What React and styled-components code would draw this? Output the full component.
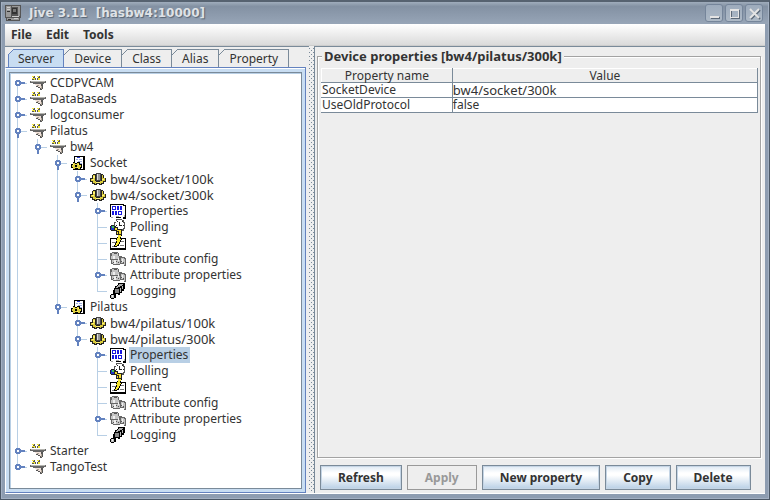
import React, { useState } from 'react';
import styled, { createGlobalStyle, css } from 'styled-components'

const GlobalStyle = createGlobalStyle`
    * {
        box-sizing: border-box;
    }
    body {
        margin: 0;
        background: #eee;
        color: #333;
        font-family: 'Noto Sans', 'DejaVu Sans', sans-serif;
        font-size: 12px;
    }
    button {
        font: inherit;
        color: inherit;
    }
`

const Window = styled.div`
    min-height: 100vh;
    display: flex;
    flex-direction: column;
    padding: 0 4px 5px;
    background: #8e9db1;
    border: 1px solid #4c5866;
    border-top: 2px solid #566270;
    box-shadow: inset 0 0 0 1px #a3b0c2;
`

const TitleBar = styled.header`
    display: flex;
    align-items: center;
    height: 22px;
    padding: 0 5px 0 3px;
    margin: 0 -3px;
    background: linear-gradient(#a0adbc, #8391a3 20%, #97a5b7);

    h1 {
        flex: 1;
        margin: 0 0 0 8px;
        color: #dfe2e6;
        font-family: 'DejaVu Sans', sans-serif;
        font-size: 12px;
        line-height: 20px;
        text-shadow: 1px 1px 1px #566373;
        white-space: pre;
    }
`

const WindowButtons = styled.div`
    display: flex;
    gap: 2px;
`

const WindowButton = styled.button`
    width: 18px;
    height: 18px;
    padding: 0;
    border: 1px solid #75859a;
    border-radius: 3px;
    background: linear-gradient(#9dabbc, #adb9c6);

    svg {
        display: block;
    }
`

const MenuBar = styled.nav`
    display: flex;
    gap: 14px;
    height: 22px;
    padding: 0 6px;
    background: linear-gradient(#fff, #dadada);
    border-bottom: 1px solid #ccc;

    button {
        padding: 0;
        border: 0;
        background: none;
        font-weight: bold;
        line-height: 20px;
    }
`

const Body = styled.main`
    flex: 1;
    display: flex;
    background: #eee;
    border-bottom: 1px solid #fff;
`

const LeftPane = styled.section`
    flex: 0 0 40%;
    min-width: 0;
    display: flex;
    flex-direction: column;
    padding-right: 3px;
    border-top: 1px solid #7a8a99;
`

const TabList = styled.div`
    display: flex;
    padding: 2px 3px 0;
`

const Tab = styled.button`
    position: relative;
    height: 18px;
    padding: 0 10px;
    border: 1px solid #7a8a99;
    border-width: 1px 1px 0 0;
    background: #eee;
    line-height: 16px;

    &::before {
        content: '';
        position: absolute;
        top: -1px;
        left: 0;
        width: 6px;
        height: 6px;
        background: linear-gradient(135deg, #eee 45%, #7a8a99 45%, #7a8a99 58%, #eee 58%);
    }

    ${props => props.$selected && css`
        padding: 0 9px;
        background: #c8ddf2;
        border-color: #6382bf;
        border-left-width: 1px;

        &::before {
            left: -1px;
            background: linear-gradient(135deg, #eee 45%, #6382bf 45%, #6382bf 58%, #c8ddf2 58%);
        }
    `}
`

const TabPanel = styled.div`
    flex: 1;
    display: flex;
    padding: 4px 3px 3px;
    background: #c8ddf2;
    border: 1px solid #6382bf;
    border-left-color: #fff;
    box-shadow: inset 0 1px #fff;
`

const Tree = styled.ul`
    flex: 1;
    margin: 0;
    padding: 2px 0;
    list-style: none;
    background: #fff;
    border: 1px solid #7a8a99;
    box-shadow: inset 1px 1px #b8cfe5;
`

const TreeRow = styled.li`
    display: flex;
    height: 16px;
`

const Toggle = styled.button`
    width: 20px;
    height: 16px;
    padding: 0;
    border: 0;
    background: none;
`

const Drawing = styled.svg`
    display: block;
    flex: none;
`

const NodeLabel = styled.span`
    margin-left: 3px;
    padding: 0 2px 0 1px;
    font-size: ${props => props.$path ? '13px' : '12px'};
    line-height: 16px;
    white-space: nowrap;
    background: ${props => props.$selected ? '#b8cfe5' : 'none'};
`

const Splitter = styled.div`
    width: 6px;
    padding: 2px 0;
    border-right: 1px solid #7a8a99;

    &::before {
        content: '';
        display: block;
        height: 100%;
        background:
            conic-gradient(at 1px 1px, transparent 75%, #7a8a99 0) 0 0 / 4px 4px,
            conic-gradient(at 1px 1px, transparent 75%, #7a8a99 0) 2px 2px / 4px 4px;
    }
`

const RightPane = styled.section`
    flex: 1;
    min-width: 0;
    display: flex;
    flex-direction: column;
    padding: 1px 3px 3px 2px;
    border-top: 1px solid #7a8a99;
`

const Properties = styled.fieldset`
    flex: 1;
    min-width: 0;
    margin: 0 1px 0 0;
    padding: 4px 2px 4px 3px;
    border: 1px solid #a3a3a3;
    box-shadow: 1px 1px #fff, inset 1px 1px #fff;

    legend {
        margin-left: 1px;
        padding: 0 2px;
        background: #eee;
        font-size: 13px;
        font-weight: bold;
        line-height: 16px;
    }
`

const Table = styled.table`
    width: 100%;
    table-layout: fixed;
    border-collapse: collapse;

    th, td {
        height: 15px;
        padding: 0;
        border: 1px solid #7a8a99;
        border-left-color: #fff;
        font-weight: normal;
        line-height: 14px;
    }
    th {
        height: 14px;
        border-top-color: #fff;
        line-height: 13px;
    }
    th:first-child {
        width: 30%;
    }
    td {
        background: #fff;
    }
    th + th, td + td {
        border-left-color: #7a8a99;
    }
`

const PathCell = styled.td`
    font-size: 13px;
`

const ButtonBar = styled.div`
    display: flex;
    gap: 5px;
    padding: 7px 3px 0;
`

const Button = styled.button`
    height: 25px;
    padding: 0 17px;
    border: 1px solid #7a8a99;
    background: linear-gradient(#dde8f3, #fff 30%, #fff 40%, #b8cfe5);
    box-shadow: inset 0 0 0 1px #c5d5e5;
    font-weight: bold;
    line-height: 22px;
    white-space: nowrap;

    &:disabled {
        color: #999;
        border-color: #999;
        background: #eee;
        box-shadow: none;
    }
`

const icons = {
    server: (
        <>
            <path fill="#555" d="M2 1h3v2h1v2H2V3h1V2H2zM7 1h3v4H7V3h1V2H7z" />
            <path fill="#f5e835" d="M2 1h2v1H2zM2 3h3v1H2zM7 1h2v1H7zM8 3h2v2H8zM4 4h1v1H4z" />
            <path fill="#666" d="M0 6h16v2h-2v1H3V8H0z" />
            <path fill="#b5b5b0" d="M1 6h14v1H1z" />
            <path fill="#555" d="M5 9h8v5h-1v1h-2v-2H8v-1H6v-2H5z" />
            <path fill="#eedfd8" d="M5 9h6v2h1v2h-2v-1H8v-1H6v-1H5z" />
            <path fill="#aaa294" d="M11 11h1v3h-1zM7 10h2v1H7z" />
        </>
    ),
    classIcon: (
        <>
            <path fill="#000" d="M4 1h11v14H4z" />
            <path fill="#fff" d="M5 2h8v12H5z" />
            <path fill="#2638c8" d="M7 2h3v1H7z" />
            <path fill="#9caee0" d="M6 4h2v1H6zM9 4h3v1H9zM8 6h4v1H8zM10 8h2v1h-2z" />
            <path fill="#000" d="M3 7h2v1h2V7h3v2h2v4h-1v2H8v-1H6v1H3v-2H1V9h2z" />
            <path fill="#e0d23c" d="M3 8h2v1h2V8h2v2h2v2h-1v2H8v-1H5v1H3v-2H2v-2h1z" />
            <path fill="#000" d="M5 10h2v2H5z" />
            <path fill="#fff27a" d="M3 9h1v1H3zM8 9h1v1H8zM7 12h1v1H7z" />
        </>
    ),
    device: (
        <>
            <path fill="#222" d="M3 3h10v1h1v3h2v4h-2v2h-2v1H9v-1H7v1H4v-1H2v-2H0V7h2V4h1z" />
            <path fill="#d8ca3a" d="M3 4h10v3h2v3h-2v2h-2v1h-1v-1H6v1H5v-1H3v-2H1V8h2z" />
            <path fill="#fff27a" d="M3 5h2v2H3zM2 8h2v1H2zM12 8h2v1h-2zM6 11h4v1H6z" />
            <path fill="#222" d="M5 4h1v5h5V4h1v6h-2v1H6v-1H5z" />
            <path fill="#444" d="M6 2h5v8H6z" />
            <path fill="#999" d="M7 3h3v6H7z" />
            <path fill="#ddd" d="M7 3h1v6H7z" />
        </>
    ),
    properties: (
        <>
            <path fill="#000" d="M0 1h14v1h2v14h-3v-1H1v-1H0z" />
            <path fill="#fff" d="M1 2h12v1h2v11h-2v1h-2v-1H6v1H1z" />
            <path fill="#aaa" d="M1 14h2v1H1zM14 12h1v2h-1zM6 13h3v1H6z" />
            <path fill="#1818e0" fillRule="evenodd" d="M2 3h4v4H2zM3 4v2h2V4zM7 3h2v4H7zM10 3h2v4h-2zM2 8h2v4H2zM5 8h2v4H5zM8 8h4v4H8zM9 9v2h2V9z" />
        </>
    ),
    polling: (
        <>
            <path fill="#555" d="M6 0h6v1h2v2h1v7h-1v2H6v-2H4V3h2z" />
            <path fill="#fff" d="M7 1h5v1h1v2h1v5h-1v1h-1v1H7V9H5V4h1V2h1z" />
            <path fill="#222" d="M9 3h1v3h2v1H9zM7 2h1v1H7zM12 2h1v1h-1zM6 6h1v1H6zM13 6h1v1h-1z" />
            <path fill="#222" d="M1 6h3v1h2v1h2v2h4v6H6v-4H1v-1H0V7h1z" />
            <path fill="#1a35c8" d="M1 7h3v4H1z" />
            <path fill="#3cc05a" d="M2 7h2v2H2z" />
            <path fill="#f5dc2c" d="M5 9h2v2h4v1H7v-1H5zM7 13h1v2H7zM9 12h2v3H9z" />
        </>
    ),
    event: (
        <>
            <path fill="#000" d="M0 3h16v12H0z" />
            <path fill="#fff" d="M1 4h14v9H1z" />
            <path fill="#777" d="M2 7h4v1H2zM10 10h4v1h-4zM2 11h3v1H2zM11 6h3v1h-3z" />
            <path fill="#000" d="M8 0h4v1h-1v3h1v1h-1v2h-1v2H9v2H7v1H4v-2h1V8h1V6H6V4h1V2h1z" />
            <path fill="#f6e62e" d="M8 0h3v2h-1v2h1v1h-1v2H9v2H8v1H7v1H5v-1h1V8h1V6H6V5h1V3h1z" />
        </>
    ),
    attribute: (
        <>
            <path fill="#666" d="M2 1h6v1h1v3h3v1h3v1h1v8h-2v-2h-4v1H3v-1H1V9H0V2h2z" />
            <path fill="#c4c4c4" d="M2 2h6v3H2zM1 5h8v3H1zM2 9h8v4H3v-1H2zM11 7h3v1h1v6h-1v-2h-3z" />
            <path fill="#f0f0f0" d="M3 5h2v3H3zM4 9h2v4H4zM8 7h1v3H8zM12 8h1v3h-1z" />
            <path fill="#555" d="M4 2h3v1H4zM3 11h1v1H3zM6 10h1v1H6zM8 11h1v1H8zM11 10h1v1h-1zM13 11h1v1h-1z" />
        </>
    ),
    logging: (
        <>
            <path fill="#000" d="M8 0h7v6h-1v2h-2v2h-2v2H8v-1H6v4H4v1H1v-1H0v-3h1v-1h2V7h1V5h1V3h2V2h1z" />
            <path fill="#aaa" d="M9 1h4v1h-1v1h-2v1H8v1H6V4h1V3h1V2h1z" />
            <path fill="#888" d="M5 6h4v4H5z" />
            <path fill="#bbb" d="M10 5h1v4h-1zM12 3h1v3h-1zM1 12h3v3H1z" />
            <path fill="#eee" d="M2 12h1v2H2z" />
        </>
    ),
}

const Icon = ({ name }) => (
    <Drawing width="16" height="16" viewBox="0 0 16 16" shapeRendering="crispEdges" aria-hidden="true">
        {icons[name]}
    </Drawing>
)

// one 20px column of tree lines, `up` and `down` say which halves are joined
const Guide = ({ up, down, branch, handle }) => (
    <Drawing width="20" height="16" viewBox="0 0 20 16" shapeRendering="crispEdges" aria-hidden="true">
        <g fill="#b8cfe5">
            {up && <rect x="7" width="1" height="8" />}
            {down && <rect x="7" y="8" width="1" height="8" />}
            {branch && <rect x="7" y="8" width="10" height="1" />}
        </g>
        {handle && (
            <g>
                <path fill="#6382bf" d="M6 5h4v1h1v4h-1v1H6v-1H5V6h1z" />
                <rect x="7" y="7" width="2" height="2" fill="#fff" />
                {handle === 'open'
                    ? <rect x="7" y="11" width="2" height="4" fill="#6382bf" />
                    : <rect x="11" y="7" width="4" height="2" fill="#6382bf" />}
            </g>
        )}
    </Drawing>
)

const deviceNodes = [
    { label: 'Properties', icon: 'properties', children: [] },
    { label: 'Polling', icon: 'polling' },
    { label: 'Event', icon: 'event' },
    { label: 'Attribute config', icon: 'attribute' },
    { label: 'Attribute properties', icon: 'attribute', children: [] },
    { label: 'Logging', icon: 'logging' },
]

const classNode = (label, path) => ({
    label,
    icon: 'classIcon',
    children: [
        { label: `${path}/100k`, icon: 'device', children: [] },
        { label: `${path}/300k`, icon: 'device', children: deviceNodes },
    ],
})

const servers = [
    { label: 'CCDPVCAM', icon: 'server', children: [] },
    { label: 'DataBaseds', icon: 'server', children: [] },
    { label: 'logconsumer', icon: 'server', children: [] },
    {
        label: 'Pilatus',
        icon: 'server',
        children: [{
            label: 'bw4',
            icon: 'server',
            children: [
                classNode('Socket', 'bw4/socket'),
                classNode('Pilatus', 'bw4/pilatus'),
            ],
        }],
    },
    { label: 'Starter', icon: 'server', children: [] },
    { label: 'TangoTest', icon: 'server', children: [] },
]

const selectedId = '/Pilatus/bw4/Pilatus/bw4/pilatus/300k/Properties'

const flatten = (nodes, closed, lines = [], parent = '') => nodes.flatMap((node, i) => {
    const id = `${parent}/${node.label}`
    const last = i === nodes.length - 1
    const open = !!node.children && node.children.length > 0 && !closed[id]
    const row = { ...node, id, lines, last, open, first: i === 0 && lines.length === 0 }
    return open ? [row, ...flatten(node.children, closed, [...lines, !last], id)] : [row]
})

const ServerTree = () => {
    const [closed, setClosed] = useState({})
    const toggle = id => setClosed({ ...closed, [id]: !closed[id] })

    return (
        <Tree role="tree" aria-label="Server">
            {flatten(servers, closed).map(row => {
                const guide = (
                    <Guide
                        up={!row.first}
                        down={!row.last}
                        branch
                        handle={row.children && (row.open ? 'open' : 'closed')}
                    />
                )
                return (
                    <TreeRow key={row.id} role="treeitem" aria-level={row.lines.length + 1} aria-selected={row.id === selectedId}>
                        {row.lines.map((line, i) => <Guide key={i} up={line} down={line} />)}
                        {row.children
                            ? <Toggle aria-label={`Toggle ${row.label}`} onClick={() => toggle(row.id)}>{guide}</Toggle>
                            : guide}
                        <Icon name={row.icon} />
                        <NodeLabel $path={row.icon === 'device'} $selected={row.id === selectedId}>{row.label}</NodeLabel>
                    </TreeRow>
                )
            })}
        </Tree>
    )
}

const App = () => {
    return (
        <>
            <GlobalStyle />
            <Window>
                <TitleBar>
                    <Drawing width="16" height="16" viewBox="0 0 16 16" shapeRendering="crispEdges" aria-hidden="true">
                        <path fill="#555" d="M0 0h16v13h-1v3H1v-3H0z" />
                        <path fill="#999" d="M1 1h5v11H1zM7 1h8v1H7zM13 2h2v9h-2zM2 13h12v2H2z" />
                        <path fill="#ccc" d="M2 2h3v1H2zM2 4h3v1H2zM7 11h7v1H7zM9 13h4v1H9z" />
                        <path fill="#333" d="M7 3h5v6H7zM2 6h3v1H2zM3 14h3v1H3z" />
                        <path fill="#777" d="M8 4h3v3H8z" />
                    </Drawing>
                    <h1>Jive 3.11  [hasbw4:10000]</h1>
                    <WindowButtons>
                        <WindowButton aria-label="Minimize">
                            <svg width="16" height="16" shapeRendering="crispEdges">
                                <path fill="#5c6978" d="M5 12h9v2H5z" />
                                <path fill="#e4e4e4" d="M4 11h9v2H4z" />
                            </svg>
                        </WindowButton>
                        <WindowButton aria-label="Maximize">
                            <svg width="16" height="16" fill="none" shapeRendering="crispEdges">
                                <path stroke="#5c6978" d="M5.500 5.500h8v8h-8z" />
                                <path stroke="#e4e4e4" d="M4.500 4.500h8v8h-8zM4 5.500h9" />
                            </svg>
                        </WindowButton>
                        <WindowButton aria-label="Close">
                            <svg width="16" height="16" fill="none" strokeWidth="2">
                                <path stroke="#5c6978" d="M5 5l9 9M14 5l-9 9" />
                                <path stroke="#e4e4e4" d="M4 4l9 9M13 4l-9 9" />
                            </svg>
                        </WindowButton>
                    </WindowButtons>
                </TitleBar>
                <MenuBar>
                    <button>File</button>
                    <button>Edit</button>
                    <button>Tools</button>
                </MenuBar>
                <Body>
                    <LeftPane>
                        <TabList role="tablist">
                            {['Server', 'Device', 'Class', 'Alias', 'Property'].map(name => (
                                <Tab key={name} role="tab" aria-selected={name === 'Server'} $selected={name === 'Server'}>
                                    {name}
                                </Tab>
                            ))}
                        </TabList>
                        <TabPanel role="tabpanel">
                            <ServerTree />
                        </TabPanel>
                    </LeftPane>
                    <Splitter />
                    <RightPane>
                        <Properties>
                            <legend>Device properties [bw4/pilatus/300k]</legend>
                            <Table>
                                <thead>
                                    <tr>
                                        <th>Property name</th>
                                        <th>Value</th>
                                    </tr>
                                </thead>
                                <tbody>
                                    <tr>
                                        <td>SocketDevice</td>
                                        <PathCell>bw4/socket/300k</PathCell>
                                    </tr>
                                    <tr>
                                        <td>UseOldProtocol</td>
                                        <td>false</td>
                                    </tr>
                                </tbody>
                            </Table>
                        </Properties>
                        <ButtonBar>
                            <Button>Refresh</Button>
                            <Button disabled>Apply</Button>
                            <Button>New property</Button>
                            <Button>Copy</Button>
                            <Button>Delete</Button>
                        </ButtonBar>
                    </RightPane>
                </Body>
            </Window>
        </>
    )
}

export default App
